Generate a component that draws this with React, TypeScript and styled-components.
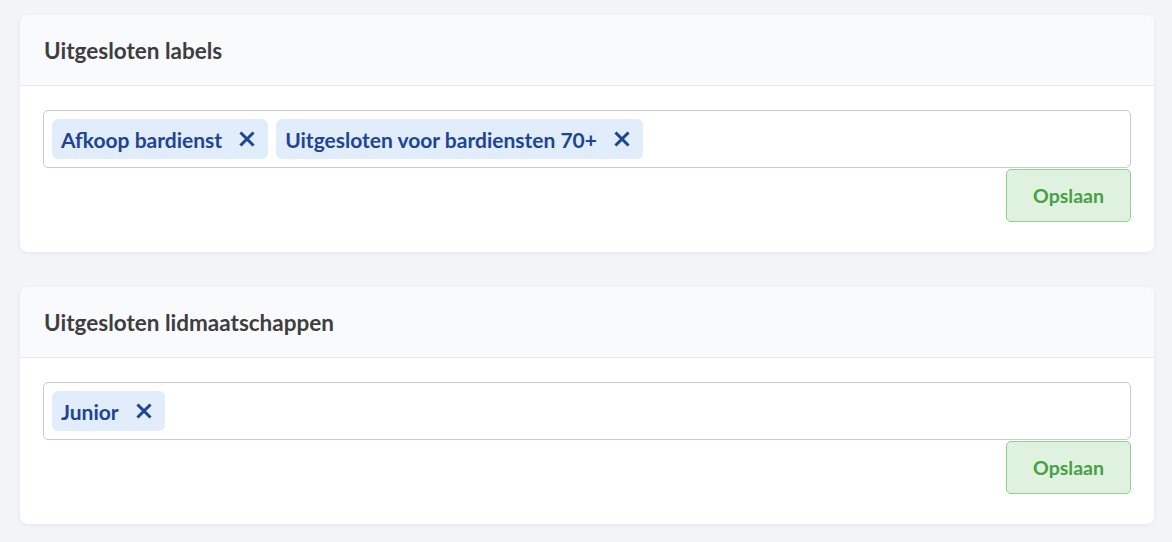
import React from 'react'
import styled, { createGlobalStyle } from 'styled-components'

const GlobalStyle = createGlobalStyle`
  body {
    margin: 0;
    background: #f3f4f8;
    font-family: Lato, "Open Sans", sans-serif;
  }
`

type Section = {
  title: string
  tags: string[]
}

const sections: Section[] = [
  { title: 'Uitgesloten labels', tags: ['Afkoop bardienst', 'Uitgesloten voor bardiensten 70+'] },
  { title: 'Uitgesloten lidmaatschappen', tags: ['Junior'] },
]

const CloseIcon = () => (
  <svg width="16" height="16" viewBox="0 0 16 16">
    <path d="M2.5 2.5 L13.5 13.5 M13.5 2.5 L2.5 13.5" stroke="currentColor" strokeWidth="3" strokeLinecap="square" />
  </svg>
)

const App = () => {
  return (
    <>
      <GlobalStyle />
      <SPage>
        {sections.map((section) => (
          <SCard key={section.title}>
            <SCardHeader>
              <SCardTitle>{section.title}</SCardTitle>
            </SCardHeader>
            <SCardBody>
              <STagInput>
                {section.tags.map((tag) => (
                  <STag key={tag}>
                    <STagLabel>{tag}</STagLabel>
                    <SRemove type="button">
                      <CloseIcon />
                    </SRemove>
                  </STag>
                ))}
              </STagInput>
              <SActions>
                <SSaveButton type="button">Opslaan</SSaveButton>
              </SActions>
            </SCardBody>
          </SCard>
        ))}
      </SPage>
    </>
  )
}

const SPage = styled.div`
  display: flex;
  flex-direction: column;
  gap: 35px;
  padding: 15px 18px 18px 20px;
`

const SCard = styled.div`
  background: #ffffff;
  border-radius: 8px;
  box-shadow: 0 1px 4px rgba(30, 40, 70, 0.07);
  overflow: hidden;
`

const SCardHeader = styled.div`
  height: 70px;
  display: flex;
  align-items: center;
  padding: 0 24px;
  background: #f9fafc;
  border-bottom: 1px solid #e5e8ee;
`

const SCardTitle = styled.div`
  font-size: 22.5px;
  font-weight: 700;
  color: #3e3e40;
`

const SCardBody = styled.div`
  padding: 24px 23px 30px 23px;
`

const STagInput = styled.div`
  display: flex;
  flex-wrap: wrap;
  gap: 8px;
  min-height: 56px;
  box-sizing: content-box;
  padding: 0 8px;
  align-items: center;
  border: 1px solid #c6cbd6;
  border-radius: 5px;
`

const STag = styled.div`
  display: flex;
  align-items: center;
  gap: 17px;
  height: 40px;
  padding: 0 13px 0 9px;
  border-radius: 6px;
  background: #e1edfb;
  color: #1e4495;
`

const STagLabel = styled.span`
  font-size: 21px;
  font-weight: 700;
`

const SRemove = styled.button`
  display: flex;
  align-items: center;
  padding: 0;
  border: 0;
  background: none;
  color: #1e4495;
  cursor: pointer;
`

const SActions = styled.div`
  display: flex;
  justify-content: flex-end;
  margin-top: 1px;
`

const SSaveButton = styled.button`
  width: 125px;
  height: 53px;
  border: 1px solid #8fd28f;
  border-radius: 5px;
  background: #dff2df;
  color: #46a046;
  font-family: Lato, "Open Sans", sans-serif;
  font-size: 19.5px;
  font-weight: 700;
  cursor: pointer;
`

export default App
